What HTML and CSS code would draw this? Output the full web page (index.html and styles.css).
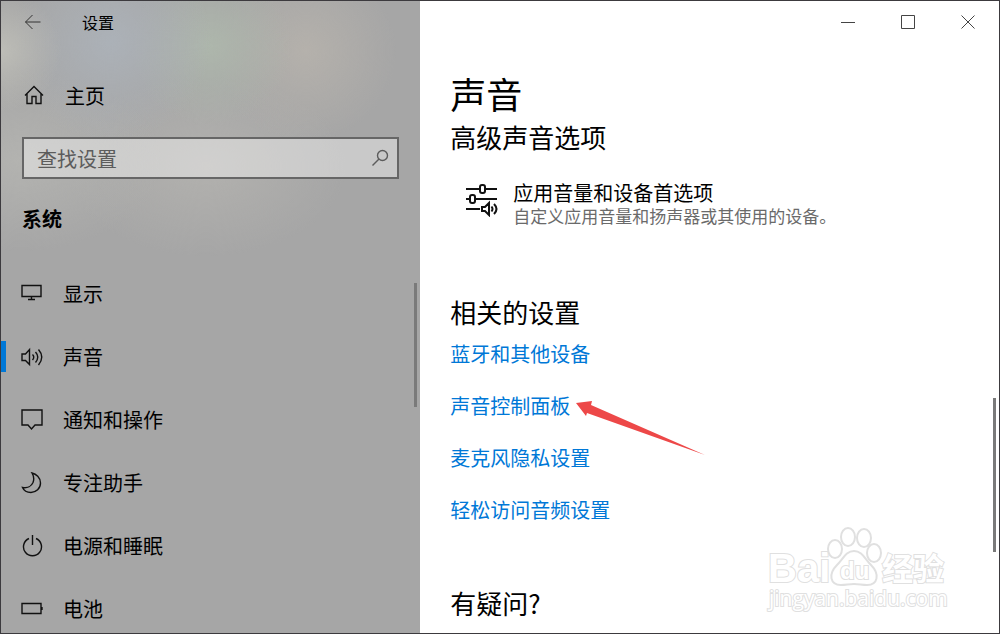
FILE: index.html
```html
<!DOCTYPE html>
<html lang="zh-CN">
<head>
  <meta charset="UTF-8">
  <title>设置</title>
  <link rel="stylesheet" href="styles.css">
</head>
<body>
<div class="window">
  <aside class="sidebar">
    <div class="titlebar">
      <button type="button" class="back" aria-label="返回">
        <svg width="18" height="16" viewBox="0 0 18 16"><path d="M16.500 8H1.500M8.500 1L1.500 8l7 7"/></svg>
      </button>
      <span>设置</span>
    </div>

    <a href="#" class="home">
      <svg width="20" height="20" viewBox="0 0 20 20"><path d="M1 10.500L10 1.500l9 9M3 9v9.500h5v-7h4v7h5V9"/></svg>
      主页
    </a>

    <div class="search">
      <input type="text" placeholder="查找设置" aria-label="查找设置">
      <svg width="18" height="18" viewBox="0 0 18 18"><circle cx="11.500" cy="6.500" r="5"/><path d="M8 10l-6.500 6.500"/></svg>
    </div>

    <h2 class="group">系统</h2>

    <nav>
      <a href="#">
        <svg width="22" height="22" viewBox="0 0 22 22"><path d="M1 2.500h19v11H1zM10.500 13.500v3M7 16.500h7"/></svg>
        显示
      </a>
      <a href="#" class="active">
        <svg width="22" height="22" viewBox="0 0 22 22"><path d="M1 8v6.500h3.500l4 4V3.500l-4 4.500zM11.500 8.500q2.500 2.500 0 5.500M14.500 6q4.500 5 0 10.500M17.500 3.500q6.500 7.500 0 15.500"/></svg>
        声音
      </a>
      <a href="#">
        <svg width="22" height="22" viewBox="0 0 22 22"><path d="M1 1h20v15h-7l-3.500 4L7 16H1z"/></svg>
        通知和操作
      </a>
      <a href="#">
        <svg width="22" height="22" viewBox="0 0 22 22"><path d="M11 1c4 1 8.500 4.500 8.500 10 0 5.500-4.500 9.500-9.500 9.500-4 0-7-1.500-8.500-5 5 1 9-1.500 10.500-5 1.200-3 .8-6.500-1-9.500z"/></svg>
        专注助手
      </a>
      <a href="#">
        <svg width="22" height="22" viewBox="0 0 22 22"><path d="M11.500 0v10M8 3.500a9 9 0 1 0 7 0"/></svg>
        电源和睡眠
      </a>
      <a href="#">
        <svg width="22" height="22" viewBox="0 0 22 22"><path d="M1 5.500h19v10H1zM21 9v3"/></svg>
        电池
      </a>
    </nav>
    <div class="scrollbar sidebar-scroll"></div>
  </aside>

  <main>
    <div class="controls">
      <button type="button" aria-label="最小化">
        <svg width="14" height="14" viewBox="0 0 14 14"><path d="M0 7.500h14"/></svg>
      </button>
      <button type="button" aria-label="最大化">
        <svg width="14" height="14" viewBox="0 0 14 14"><path d="M.5.500h13v13H.5z"/></svg>
      </button>
      <button type="button" aria-label="关闭">
        <svg width="14" height="14" viewBox="0 0 14 14"><path d="M.5.500l13 13M13.500.500l-13 13"/></svg>
      </button>
    </div>

    <div class="content">
      <h1>声音</h1>
      <h2>高级声音选项</h2>
      <a href="#" class="option">
        <svg width="34" height="34" viewBox="0 0 34 34">
          <path d="M1 6h14M20 6h12M1 16h4M10 16h22M1 26h14"/>
          <rect x="15" y="2" width="5" height="8" rx="2"/>
          <rect x="5" y="12" width="5" height="8" rx="2"/>
          <path d="M17 24v4h3l4 4V20l-4 4zM26.500 23.500q2 2.500 0 5M29 21q5 5 0 10"/>
        </svg>
        <span class="option-text">
          <span class="option-title">应用音量和设备首选项</span>
          <span class="option-desc">自定义应用音量和扬声器或其使用的设备。</span>
        </span>
      </a>

      <h2 class="next">相关的设置</h2>
      <ul class="links">
        <li><a href="#">蓝牙和其他设备</a></li>
        <li class="marked">
          <a href="#">声音控制面板</a>
          <svg class="arrow" width="130" height="56" viewBox="0 0 130 56"><path d="M0 2L16 0l-1 4 114 50L11 12l-1 3z"/></svg>
        </li>
        <li><a href="#">麦克风隐私设置</a></li>
        <li><a href="#">轻松访问音频设置</a></li>
      </ul>

      <h2 class="next">有疑问?</h2>
    </div>
    <div class="scrollbar main-scroll"></div>

    <svg class="watermark" width="190" height="90" viewBox="0 0 190 90">
      <text class="wm-bold" x="3" y="59" font-size="40">Bai</text>
      <ellipse cx="70" cy="26" rx="7" ry="9"/>
      <ellipse cx="83" cy="14" rx="7" ry="9"/>
      <ellipse cx="99" cy="15" rx="7" ry="9"/>
      <ellipse cx="109" cy="30" rx="7" ry="9"/>
      <path d="M89 28c8 0 11 8 17 14 9 9 7 20-4 20-5 0-8-1-13-1s-8 1-13 1c-11 0-13-11-4-20 6-6 9-14 17-14z"/>
      <text class="wm-bold" x="75" y="56" font-size="24">du</text>
      <text class="wm-bold" x="117" y="57" font-size="31">经验</text>
      <text class="wm-url" x="4" y="83" font-size="21">jingyan.baidu.com</text>
    </svg>
  </main>
</div>
</body>
</html>
```

FILE: styles.css
```css
* {
  box-sizing: border-box;
}

body {
  margin: 0;
  font-family: "Noto Sans CJK SC", "Noto Sans", sans-serif;
  font-size: 20px;
  color: #000;
}

h1, h2, ul {
  margin: 0;
  padding: 0;
  font-weight: normal;
}

a {
  color: inherit;
  text-decoration: none;
}

button {
  display: flex;
  align-items: center;
  justify-content: center;
  padding: 0;
  border: none;
  background: none;
}

svg {
  flex: none;
  fill: none;
  stroke: #111;
  stroke-width: 1.4;
}

.window {
  display: flex;
  height: 100vh;
  border: 1px solid #3c3a3e;
  overflow: hidden;
}

/* sidebar */
.sidebar {
  position: relative;
  width: 42%;
  overflow: hidden;
  background:
    radial-gradient(circle at 0 50px, #bdbdb7, transparent 60px),
    radial-gradient(circle at 110px 40px, rgba(173, 180, 188, 0.8), transparent 100px),
    radial-gradient(circle at 210px 45px, rgba(174, 184, 172, 0.9), transparent 80px),
    radial-gradient(circle at 305px 50px, rgba(182, 178, 172, 0.9), transparent 90px),
    radial-gradient(ellipse 140px 90px at 20px 160px, #b3b3b0, transparent),
    radial-gradient(ellipse 140px 90px at 205px 165px, #b2b1ae, transparent),
    #a6a6a6;
}

.titlebar {
  display: flex;
  align-items: center;
  height: 42px;
  padding-left: 22px;
  font-size: 16px;
}

.back {
  width: 20px;
  height: 40px;
  margin-right: 39px;
}

.back svg {
  stroke: #333;
  stroke-width: 1;
}

.home {
  display: flex;
  align-items: center;
  gap: 21px;
  height: 40px;
  margin-top: 32px;
  padding-left: 23px;
}

.search {
  display: flex;
  align-items: center;
  height: 42px;
  margin: 22px 21px 0 21px;
  padding: 0 8px 0 13px;
  border: 2px solid #666;
  background-color: rgba(255, 255, 255, 0.4);
}

.search input {
  flex: 1;
  min-width: 0;
  padding: 0;
  border: none;
  outline: none;
  background: none;
  font: inherit;
}

.search input::placeholder {
  color: #5c5c5c;
}

.search svg {
  stroke: #5c5c5c;
}

.group {
  margin: 20px 0 23px 21px;
  font-size: 20px;
  line-height: 40px;
  font-weight: bold;
}

nav a {
  display: flex;
  align-items: center;
  gap: 20px;
  height: 63px;
  padding-left: 20px;
}

nav .active::before {
  content: "";
  width: 5px;
  height: 31px;
  margin: 0 -5px 0 -20px;
  background-color: #0078d7;
}

.scrollbar {
  position: absolute;
  width: 3px;
  background-color: #7a7a7a;
}

.sidebar-scroll {
  top: 282px;
  right: 3px;
  height: 124px;
}

.main-scroll {
  top: 397px;
  right: 3px;
  height: 154px;
}

/* content */
main {
  position: relative;
  flex: 1;
  background-color: #fff;
}

.controls {
  display: flex;
  justify-content: flex-end;
  padding-right: 1px;
}

.controls button {
  width: 60px;
  height: 42px;
}

.controls svg {
  stroke: #444;
  stroke-width: 1;
}

.content {
  padding: 28px 30px 0 30px;
}

h1 {
  font-size: 36px;
  line-height: 44px;
}

main h2 {
  font-size: 26px;
  line-height: 36px;
  margin-top: 4px;
}

.option {
  display: flex;
  gap: 14px;
  margin-top: 26px;
  padding: 0 0 4px 15px;
}

.option svg {
  margin-top: 2px;
  stroke-width: 2;
}

.option-text {
  display: flex;
  flex-direction: column;
}

.option-title {
  line-height: 24px;
}

.option-desc {
  font-size: 17px;
  line-height: 22px;
  color: #6a6a6a;
}

main .next {
  margin-top: 63px;
}

.links {
  display: flex;
  flex-direction: column;
  gap: 28px;
  margin-top: 12px;
  list-style: none;
  line-height: 24px;
  color: #0078d7;
}

.marked {
  position: relative;
}

.arrow {
  position: absolute;
  top: 7px;
  left: 126px;
  fill: #ed4848;
  stroke: none;
}

.watermark {
  position: absolute;
  right: 44px;
  bottom: 20px;
  fill: #fff;
  stroke: #e0e0e0;
  stroke-width: 2;
}

.watermark text {
  paint-order: stroke;
}

.wm-bold {
  font-family: "Liberation Sans", "Noto Sans CJK SC", sans-serif;
  font-weight: bold;
}

.wm-url {
  font-family: "Open Sans", sans-serif;
}
```
